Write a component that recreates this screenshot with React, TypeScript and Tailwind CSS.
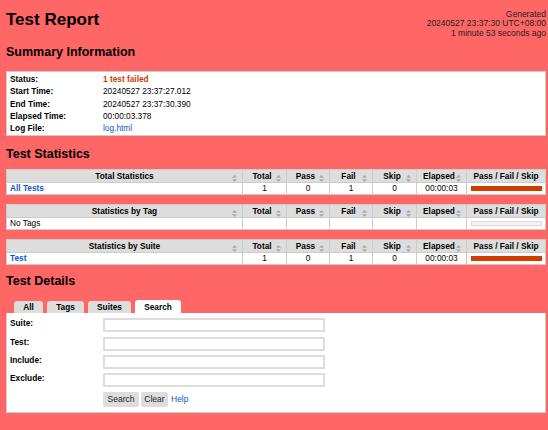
import React from 'react';

const font = { fontFamily: '"Liberation Sans", Arial, Helvetica, sans-serif' };

function SortIcon() {
  return (
    <svg width="5" height="7" viewBox="0 0 5 7" className="inline-block">
      <path d="M2.5 0 L5 2.8 L0 2.8 Z" fill="#aaa" />
      <path d="M2.5 7 L5 4.2 L0 4.2 Z" fill="#aaa" />
    </svg>
  );
}

function Th({ label, first }: { label: string; first?: boolean }) {
  return (
    <th className="relative h-[13px] border border-[#ccc] bg-[#ddd] p-0 text-center font-bold text-black">
      <span className={first ? '' : 'pr-[5px]'}>{label}</span>
      <span className="absolute right-[5px] top-[3px] leading-none">
        <SortIcon />
      </span>
    </th>
  );
}

type Row = { name: string; link: boolean; total: string; pass: string; fail: string; skip: string; elapsed: string; failed: boolean };

function StatTable({ title, row }: { title: string; row: Row }) {
  return (
    <table className="w-full table-fixed border-collapse bg-white text-[8.3px] leading-[11px]">
      <colgroup>
        <col className="w-[236px]" />
        <col className="w-[44px]" />
        <col className="w-[43px]" />
        <col className="w-[43px]" />
        <col className="w-[44px]" />
        <col className="w-[50px]" />
        <col />
      </colgroup>
      <thead>
        <tr>
          <Th label={title} first />
          <Th label="Total" />
          <Th label="Pass" />
          <Th label="Fail" />
          <Th label="Skip" />
          <Th label="Elapsed" />
          <th className="h-[13px] border border-[#ccc] bg-[#ddd] p-0 text-center font-bold">Pass / Fail / Skip</th>
        </tr>
      </thead>
      <tbody>
        <tr className="h-[12px]">
          <td className="border border-[#ccc] px-[3px] py-0">
            {row.link ? <span className="font-bold text-[#15c]">{row.name}</span> : row.name}
          </td>
          <td className="border border-[#ccc] p-0 text-center">{row.total}</td>
          <td className="border border-[#ccc] p-0 text-center">{row.pass}</td>
          <td className="border border-[#ccc] p-0 text-center">{row.fail}</td>
          <td className="border border-[#ccc] p-0 text-center">{row.skip}</td>
          <td className="border border-[#ccc] p-0 text-center">{row.elapsed}</td>
          <td className="border border-[#ccc] pl-[4px] pr-[3px] py-0">
            {row.failed ? (
              <div className="h-[5px] w-full bg-[#ce3e01]" />
            ) : (
              <div className="h-[5px] w-full border border-[#ddd] bg-[#f4f4f4]" />
            )}
          </td>
        </tr>
      </tbody>
    </table>
  );
}

export default function App() {
  const summary: [string, React.ReactNode][] = [
    ['Status:', <span className="font-bold text-[#ce3e01]">1 test failed</span>],
    ['Start Time:', '20240527 23:37:27.012'],
    ['End Time:', '20240527 23:37:30.390'],
    ['Elapsed Time:', '00:00:03.378'],
    ['Log File:', <span className="text-[#15c]">log.html</span>],
  ];

  return (
    <div className="min-h-[430px] w-[548px] bg-[#ff6666] pb-[10px] pl-[6px] pr-[2px] text-[8.3px] text-black" style={font}>
      {/* Header */}
      <div className="flex items-start justify-between">
        <h1 className="pt-[10px] text-[17px] font-bold leading-[20px]">Test Report</h1>
        <div className="pt-[10px] text-right text-[8.5px] leading-[9.3px] text-[#222]">
          <div>Generated</div>
          <div>20240527 23:37:30 UTC+08:00</div>
          <div>1 minute 53 seconds ago</div>
        </div>
      </div>

      {/* Summary */}
      <h2 className="mt-[6px] text-[12.5px] font-bold leading-[16px]">Summary Information</h2>
      <div className="mt-[11px] border border-[#ccc] bg-white px-[3px] py-[1px]">
        {summary.map(([k, v]) => (
          <div key={k} className="flex h-[12.3px] items-center leading-[12px]">
            <div className="w-[93px] font-bold">{k}</div>
            <div>{v}</div>
          </div>
        ))}
      </div>

      {/* Statistics */}
      <h2 className="mt-[10px] text-[12.5px] font-bold leading-[16px]">Test Statistics</h2>
      <div className="mt-[7px] flex flex-col gap-[9px]">
        <StatTable
          title="Total Statistics"
          row={{ name: 'All Tests', link: true, total: '1', pass: '0', fail: '1', skip: '0', elapsed: '00:00:03', failed: true }}
        />
        <StatTable
          title="Statistics by Tag"
          row={{ name: 'No Tags', link: false, total: '', pass: '', fail: '', skip: '', elapsed: '', failed: false }}
        />
        <StatTable
          title="Statistics by Suite"
          row={{ name: 'Test', link: true, total: '1', pass: '0', fail: '1', skip: '0', elapsed: '00:00:03', failed: true }}
        />
      </div>

      {/* Details */}
      <h2 className="mt-[8px] text-[12.5px] font-bold leading-[16px]">Test Details</h2>
      <div className="mt-[11px] flex items-end gap-[4px] pl-[8px]">
        <div className="h-[12px] w-[29px] rounded-t-[3px] bg-[#ddd] text-center font-bold leading-[13px]">All</div>
        <div className="h-[12px] w-[37px] rounded-t-[3px] bg-[#ddd] text-center font-bold leading-[13px]">Tags</div>
        <div className="h-[12px] w-[43px] rounded-t-[3px] bg-[#ddd] text-center font-bold leading-[13px]">Suites</div>
        <div className="h-[13px] w-[46px] rounded-t-[3px] bg-white text-center font-bold leading-[14px]">Search</div>
      </div>
      <div className="border border-t-0 border-[#ccc] bg-white px-[3px] pb-[5px] pt-[5px]">
        {['Suite:', 'Test:', 'Include:', 'Exclude:'].map((l) => (
          <div key={l} className="mb-[4.3px] flex h-[14px] items-start">
            <div className="w-[93px] font-bold leading-[10px]">{l}</div>
            <div className="h-[14px] w-[222px] border-2 border-[#ddd]" />
          </div>
        ))}
        <div className="flex items-center gap-[2px] pl-[93px]">
          <div className="flex h-[15px] w-[36px] items-center justify-center rounded-[2px] bg-[#ddd] text-[8.5px] text-[#222]">Search</div>
          <div className="flex h-[15px] w-[27px] items-center justify-center rounded-[2px] bg-[#ddd] text-[8.5px] text-[#222]">Clear</div>
          <span className="ml-[1px] text-[8.5px] text-[#15c]">Help</span>
        </div>
      </div>
    </div>
  );
}
